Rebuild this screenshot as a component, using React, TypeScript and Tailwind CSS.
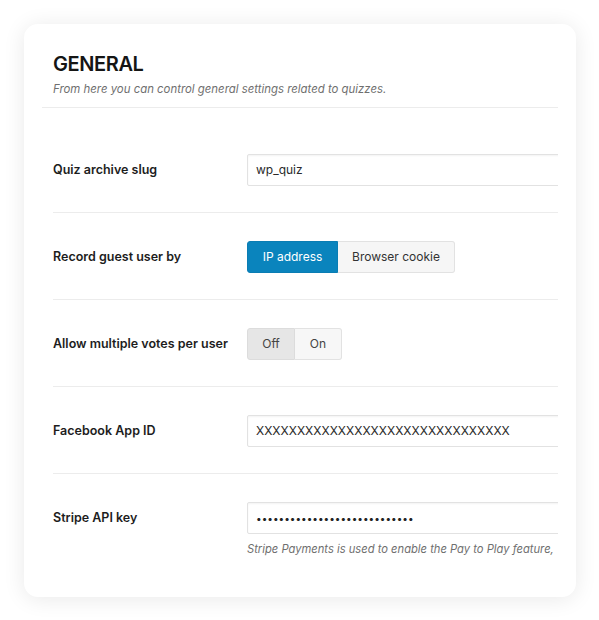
import React from "react";

const font = { fontFamily: "Inter, 'Noto Sans', sans-serif" };

function Row({ label, children, first, last }: { label: string; children: React.ReactNode; first?: boolean; last?: boolean }) {
  return (
    <div className={`flex items-start ${first ? "pt-[46px]" : "pt-7"} ${last ? "pb-0" : "pb-[26px] border-b border-[#ececec]"}`}>
      <div className="w-[194px] shrink-0 h-8 flex items-center text-[12.5px] font-semibold text-[#1d1d1d]">{label}</div>
      <div className="flex-1 min-w-0">{children}</div>
    </div>
  );
}

function TextBox({ value, dots }: { value: string; dots?: boolean }) {
  return (
    <div className="h-8 w-[420px] border border-[#e2e2e2] rounded-[2px] bg-white shadow-[inset_0_1px_2px_rgba(0,0,0,0.05)] flex items-center pl-2 text-[12px] text-[#2a2a2a] whitespace-nowrap overflow-hidden">
      {dots ? <span className="text-[10px] text-[#222]">{value}</span> : value}
    </div>
  );
}

export default function App() {
  return (
    <div className="min-h-[620px] bg-white p-6" style={font}>
      <div className="w-[552px] h-[573px] bg-white rounded-[14px] shadow-[0_2px_22px_rgba(0,0,0,0.09)] pt-[27px] px-[18px]">
        <div className="pl-[11px] pb-[10px] border-b border-[#ececec]">
          <h2 className="text-[20px] leading-[26px] font-semibold text-[#151515] tracking-[-0.4px]">GENERAL</h2>
          <p className="mt-[4px] text-[11.4px] leading-[16px] italic text-[#6f6f6f]">
            From here you can control general settings related to quizzes.
          </p>
        </div>
        <div className="ml-[11px] overflow-hidden">
          <Row label="Quiz archive slug" first>
            <TextBox value="wp_quiz" />
          </Row>
          <Row label="Record guest user by">
            <div className="flex h-8 text-[12px]">
              <div className="w-[91px] flex items-center justify-center bg-[#0a84bd] text-white rounded-l-[3px] border border-[#0a7db3]">IP address</div>
              <div className="w-[117px] flex items-center justify-center bg-[#f6f6f6] text-[#333] border border-l-0 border-[#e2e2e2] rounded-r-[3px]">Browser cookie</div>
            </div>
          </Row>
          <Row label="Allow multiple votes per user">
            <div className="flex h-8 text-[12px]">
              <div className="w-[48px] flex items-center justify-center bg-[#e6e6e6] text-[#444] border border-[#dcdcdc] rounded-l-[3px]">Off</div>
              <div className="w-[47px] flex items-center justify-center bg-[#f7f7f7] text-[#444] border border-l-0 border-[#e2e2e2] rounded-r-[3px]">On</div>
            </div>
          </Row>
          <Row label="Facebook App ID">
            <TextBox value="XXXXXXXXXXXXXXXXXXXXXXXXXXXXXXX" />
          </Row>
          <Row label="Stripe API key" last>
            <TextBox value={"•".repeat(28)} dots />
            <p className="mt-[7px] text-[11.2px] leading-[16px] italic text-[#6f6f6f] whitespace-nowrap">
              Stripe Payments is used to enable the Pay to Play feature,
            </p>
          </Row>
        </div>
      </div>
    </div>
  );
}
